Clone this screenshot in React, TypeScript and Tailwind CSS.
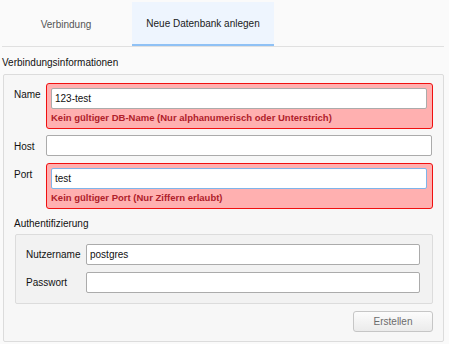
import React from "react";

const font = { fontFamily: '"Liberation Sans", Arial, sans-serif' };

type FieldProps = {
  value?: string;
  focused?: boolean;
};

const Field: React.FC<FieldProps> = ({ value = "", focused = false }) => (
  <div
    className={
      "h-[21px] w-full rounded-[2px] border bg-white px-[3px] text-[10px] leading-[19px] text-[#111] " +
      (focused ? "border-[#7eb4ea]" : "border-[#ababab]")
    }
  >
    {value}
  </div>
);

const ErrorBox: React.FC<{ value: string; message: string; focused?: boolean }> = ({
  value,
  message,
  focused,
}) => (
  <div className="rounded-[3px] border border-[#f01010] bg-[#ffb0b0] pt-[4px] pb-[4px] pl-[4px] pr-[5px]">
    <Field value={value} focused={focused} />
    <div className="mt-[3px] text-[9.5px] font-bold leading-[12px] text-[#b0202a]">{message}</div>
  </div>
);

const Row: React.FC<{ label: string; children: React.ReactNode }> = ({ label, children }) => (
  <div className="flex">
    <div className="w-[32px] shrink-0 pt-[6px] text-[10px] leading-[12px] text-[#111]">{label}</div>
    <div className="flex-1">{children}</div>
  </div>
);

export default function App() {
  return (
    <div className="h-[344px] w-[449px] overflow-hidden bg-[#fafafa]" style={font}>
      {/* tabs */}
      <div className="flex h-[46px] items-stretch">
        <div className="flex w-[132px] items-center justify-center pt-[2px] text-[10px] text-[#555]">
          Verbindung
        </div>
        <div className="mt-[2px] flex w-[142px] items-center justify-center border-b-2 border-[#8fc1f5] bg-[#eef5fe] text-[10px] text-[#1a1a1a]">
          Neue Datenbank anlegen
        </div>
      </div>
      <div className="mx-[2px] h-px w-[442px] bg-[#e0e0e0]" />

      <div className="mt-[10px] pl-[2px] text-[10px] leading-[12px] text-[#111]">Verbindungsinformationen</div>

      <div className="ml-[3px] mt-[5px] h-[268px] w-[441px] rounded-[2px] border border-[#dcdcdc] bg-[#f7f7f7] pl-[10px] pr-[10px] pt-[8px]">
        <div className="flex flex-col gap-[6px]">
          <Row label="Name">
            <ErrorBox value="123-test" message="Kein gültiger DB-Name (Nur alphanumerisch oder Unterstrich)" />
          </Row>
          <div className="flex">
            <div className="w-[32px] shrink-0 pt-[6px] text-[10px] leading-[12px] text-[#111]">Host</div>
            <div className="flex-1 pr-px">
              <Field />
            </div>
          </div>
          <div className="mt-px">
            <Row label="Port">
              <ErrorBox value="test" message="Kein gültiger Port (Nur Ziffern erlaubt)" focused />
            </Row>
          </div>
        </div>

        <div className="mt-[9px] text-[10px] leading-[12px] text-[#111]">Authentifizierung</div>

        <div className="ml-px mt-[4px] flex flex-col gap-[7px] rounded-[2px] border border-[#dcdcdc] bg-[#f2f2f2] pb-[10px] pl-[10px] pr-[12px] pt-[9px]">
          <div className="flex items-center">
            <div className="w-[60px] shrink-0 text-[10px] text-[#111]">Nutzername</div>
            <Field value="postgres" />
          </div>
          <div className="flex items-center">
            <div className="w-[60px] shrink-0 text-[10px] text-[#111]">Passwort</div>
            <Field />
          </div>
        </div>

        <div className="mt-[7px] flex justify-end">
          <button className="h-[21px] w-[80px] rounded-[3px] border border-[#c6c6c6] bg-gradient-to-b from-[#fcfcfc] to-[#ebebeb] text-[10px] text-[#6b6b6b]">
            Erstellen
          </button>
        </div>
      </div>
    </div>
  );
}
